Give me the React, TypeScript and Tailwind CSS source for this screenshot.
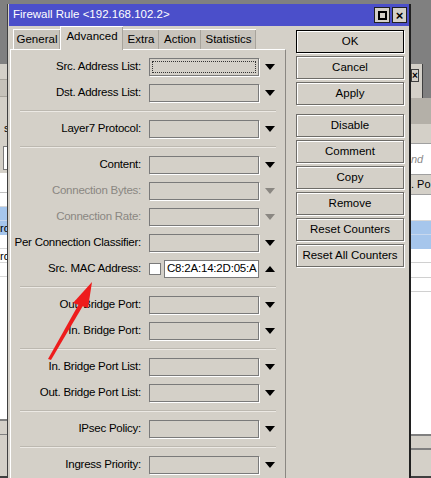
import React from "react";

const font = { fontFamily: '"Liberation Sans", Arial, sans-serif' };

type Field = {
  label: string;
  disabled?: boolean;
  focus?: boolean;
  mac?: boolean;
  sepBefore?: boolean;
};

const fields: Field[] = [
  { label: "Src. Address List:", focus: true },
  { label: "Dst. Address List:" },
  { label: "Layer7 Protocol:", sepBefore: true },
  { label: "Content:", sepBefore: true },
  { label: "Connection Bytes:", disabled: true },
  { label: "Connection Rate:", disabled: true },
  { label: "Per Connection Classifier:" },
  { label: "Src. MAC Address:", mac: true },
  { label: "Out. Bridge Port:", sepBefore: true },
  { label: "In. Bridge Port:" },
  { label: "In. Bridge Port List:", sepBefore: true },
  { label: "Out. Bridge Port List:" },
  { label: "IPsec Policy:", sepBefore: true },
  { label: "Ingress Priority:", sepBefore: true },
];

const buttons = ["OK", "Cancel", "Apply", "Disable", "Comment", "Copy", "Remove", "Reset Counters", "Reset All Counters"];

const tabs = [
  { name: "General", w: "w-[47px]" },
  { name: "Advanced", w: "w-[63px]" },
  { name: "Extra", w: "w-[36px]" },
  { name: "Action", w: "w-[42px]" },
  { name: "Statistics", w: "w-[55px]" },
];

function Triangle({ up, gray }: { up?: boolean; gray?: boolean }) {
  return (
    <svg width="10" height="6" viewBox="0 0 10 6" className="ml-[6px]">
      <polygon points={up ? "0,6 10,6 5,0" : "0,0 10,0 5,6"} fill={gray ? "#8a8782" : "#000"} />
    </svg>
  );
}

function Separator() {
  return <div className="mx-[9px] my-[8px] h-[2px] border-t border-[#bcb8b0] border-b border-b-[#ece9e4]" />;
}

function Row({ f }: { f: Field }) {
  return (
    <div className="flex h-[18px] items-center">
      <div
        className={`w-[130px] whitespace-nowrap text-right text-[11.5px] leading-none tracking-[-0.25px] ${
          f.disabled ? "text-[#8a8782]" : "text-black"
        }`}
      >
        {f.label}
      </div>
      {f.mac ? (
        <div className="ml-[8px] flex items-center">
          <div className="h-[12px] w-[12px] border border-[#7a7a7a] bg-white" />
          <div className="ml-[3px] flex h-[18px] w-[95px] items-center whitespace-nowrap border border-[#7a7a7a] bg-white pl-[2px] text-[11.5px] tracking-[-0.2px] text-black">
            C8:2A:14:2D:05:A
          </div>
          <Triangle up />
        </div>
      ) : (
        <div className="ml-[8px] flex items-center">
          <div className="h-[18px] w-[110px] border border-[#7a7a7a] p-[2px] shadow-[1px_1px_0_#fff]">
            {f.focus && <div className="h-full w-full border border-dotted border-[#333]" />}
          </div>
          <Triangle gray={f.disabled} />
        </div>
      )}
    </div>
  );
}

export default function App() {
  return (
    <div className="relative h-[478px] w-[431px] overflow-hidden bg-[#808080]" style={font}>
      {/* background list window, left strip */}
      <div className="absolute left-0 top-[64px] flex h-[414px] w-[10px] flex-col">
        <div className="h-[16px] shrink-0 border-b border-[#a8a49c] bg-[#d4d0c8]" />
        <div className="h-[17px] shrink-0 border-b border-[#a8a49c] bg-[#c6c2ba]" />
        <div className="h-[44px] shrink-0 bg-[#d4d0c8] pl-[4px] pt-[26px] text-[11px] leading-none">s</div>
        <div className="h-[32px] shrink-0 bg-[#d4d0c8] pl-[3px] pt-[5px]">
          <div className="h-[24px] border border-[#7a7a7a] bg-white" />
        </div>
        <div className="h-[20px] shrink-0 border-b border-[#c0c0c0] bg-white" />
        <div className="h-[14px] shrink-0 border-b border-[#d8d8d8] bg-white" />
        <div className="h-[14px] shrink-0 border-b border-[#c8d8ee] bg-[#a6c6ec]" />
        <div className="h-[14px] shrink-0 bg-[#a6c6ec] text-[11px] leading-[14px]">rd</div>
        <div className="h-[14px] shrink-0 border-b border-[#d8d8d8] bg-white" />
        <div className="h-[14px] shrink-0 border-b border-[#d8d8d8] bg-white text-[11px] leading-[14px]">rd</div>
        <div className="h-[14px] shrink-0 border-b border-[#d8d8d8] bg-white" />
        <div className="h-[144px] shrink-0 border-b-2 border-[#808080] bg-white" />
        <div className="h-[14px] shrink-0 border-b border-[#808080] bg-[#d4d0c8]" />
        <div className="flex-1 border-b-2 border-[#404040] bg-[#d4d0c8]" />
      </div>

      {/* background windows, right strip */}
      <div className="absolute left-[411px] top-[64px] h-[34px] w-[12px] border-r border-[#404040] bg-[#d4d0c8]">
        <div className="mt-[5px] flex h-[13px] w-[8px] items-center justify-center border border-[#404040] bg-[#d4d0c8] text-[10px] font-bold leading-none">
          ×
        </div>
      </div>
      <div className="absolute left-[411px] top-[98px] flex h-[380px] w-[20px] flex-col">
        <div className="h-[26px] shrink-0 bg-[#b4b0a8]" />
        <div className="h-[19px] shrink-0 bg-[#d4d0c8]" />
        <div className="flex h-[32px] shrink-0 items-center border-y border-[#a0a0a0] bg-white text-[11px] italic text-[#8a8a8a]">
          nd
        </div>
        <div className="flex h-[20px] shrink-0 items-center border-b border-[#a0a0a0] bg-[#d4d0c8] text-[11px] leading-none">
          . Po
        </div>
        <div className="h-[26px] shrink-0 border-b border-[#d8d8d8] bg-white" />
        <div className="h-[14px] shrink-0 border-b border-[#c8d8ee] bg-[#a6c6ec]" />
        <div className="h-[14px] shrink-0 bg-[#a6c6ec]" />
        <div className="h-[14px] shrink-0 border-b border-[#d0d0d0] bg-white" />
        <div className="h-[15px] shrink-0 border-b border-[#d0d0d0] bg-white" />
        <div className="h-[14px] shrink-0 border-b border-[#d0d0d0] bg-white" />
        <div className="h-[144px] shrink-0 border-b-2 border-[#808080] bg-white" />
        <div className="h-[14px] shrink-0 border-b-2 border-[#808080] bg-[#d4d0c8]" />
        <div className="flex-1 border-b-2 border-[#404040] bg-[#d4d0c8]" />
      </div>

      {/* Firewall Rule window */}
      <div className="absolute left-[8px] top-[4px] flex h-[480px] w-[403px] flex-col overflow-hidden border-l border-[#d4d0c8] border-r-2 border-r-[#202020] bg-[#d4d0c8] shadow-[-1px_0_0_#404040]">
        <div className="flex h-[22px] shrink-0 items-center justify-between bg-[#4b4fca] pl-[4px] pr-[2px]">
          <span className="text-[11.5px] leading-none text-white">Firewall Rule &lt;192.168.102.2&gt;</span>
          <div className="flex gap-[2px]">
            <div className="flex h-[16px] w-[16px] items-center justify-center border border-[#202020] bg-[#d4d0c8]">
              <div className="h-[9px] w-[9px] border-2 border-black" />
            </div>
            <div className="flex h-[16px] w-[15px] items-center justify-center border border-[#202020] bg-[#d4d0c8] text-[13px] font-bold leading-none">
              ×
            </div>
          </div>
        </div>

        <div className="flex shrink-0">
          <div className="ml-[1px] w-[276px]">
            {/* tabs */}
            <div className="flex h-[23px] items-end pl-[3px] text-[11.5px] leading-none">
              {tabs.map((t, i) =>
                i === 1 ? (
                  <div
                    key={t.name}
                    className={`relative z-10 mb-[-1px] flex h-[24px] items-center justify-center border-l border-t border-white bg-[#d4d0c8] pb-[3px] shadow-[inset_-1px_0_0_#a8a49c] ${t.w}`}
                  >
                    {t.name}
                  </div>
                ) : (
                  <div
                    key={t.name}
                    className={`flex h-[20px] items-center justify-center border-t border-white bg-[#c8c4bc] shadow-[inset_-1px_0_0_#a8a49c] ${i === 0 ? "border-l" : ""} ${t.w}`}
                  >
                    {t.name}
                  </div>
                )
              )}
            </div>
            {/* panel */}
            <div className="h-[440px] border-l border-t border-white border-r border-r-[#8a8782] pt-[8px]">
              {fields.map((f, i) => (
                <div key={f.label}>
                  {f.sepBefore ? <Separator /> : i > 0 ? <div className="h-[8px]" /> : null}
                  <Row f={f} />
                </div>
              ))}
            </div>
          </div>

          {/* buttons */}
          <div className="ml-[10px] mt-[4px] flex w-[108px] flex-col">
            {buttons.map((b, i) => (
              <div
                key={b}
                className={`flex h-[23px] items-center justify-center text-[11.5px] leading-none text-black shadow-[inset_1px_1px_0_#fff,1px_1px_0_#fff] ${
                  i === 0 ? "border border-black" : "border border-[#6e6c68]"
                } ${i === 0 ? "" : i === 3 ? "mt-[9px]" : "mt-[3px]"}`}
              >
                {b}
              </div>
            ))}
          </div>
        </div>
      </div>

      {/* red arrow annotation */}
      <svg className="pointer-events-none absolute left-0 top-0" width="431" height="478">
        <polygon points="48,359 51,360 84,304 80,302" fill="#ee1c1c" />
        <polygon points="92,282 73,303 88,308" fill="#ee1c1c" />
      </svg>
    </div>
  );
}
